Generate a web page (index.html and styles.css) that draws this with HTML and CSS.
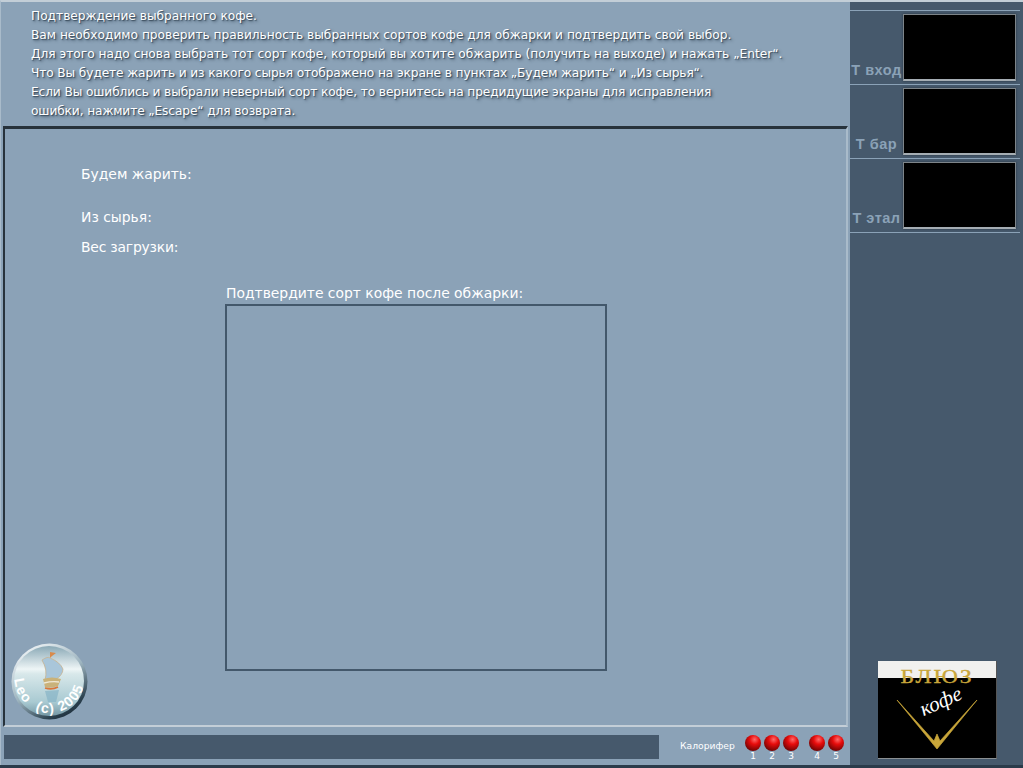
FILE: index.html
```html
<!DOCTYPE html>
<html>
<head>
    <meta charset="utf-8">
    <meta content="width=device-width, initial-scale=1" name="viewport">
    <title>Подтверждение выбранного кофе</title>
    <link rel="stylesheet" href="styles.css">
</head>
<body>
<div class="screen">
    <div class="left">
        <div class="help">
            <p>Подтверждение выбранного кофе.</p>
            <p>Вам необходимо проверить правильность выбранных сортов кофе для обжарки и подтвердить свой выбор.</p>
            <p>Для этого надо снова выбрать тот сорт кофе, который вы хотите обжарить (получить на выходе) и нажать „Enter“.</p>
            <p class="tight">Что Вы будете жарить и из какого сырья отображено на экране в пунктах „Будем жарить“ и „Из сырья“.</p>
            <p class="tight">Если Вы ошиблись и выбрали неверный сорт кофе, то вернитесь на предидущие экраны для исправления</p>
            <p class="tight">ошибки, нажмите „Escape“ для возврата.</p>
        </div>
        <div class="panel">
            <div class="field field-roast">Будем жарить:</div>
            <div class="field field-raw">Из сырья:</div>
            <div class="field field-weight">Вес загрузки:</div>
            <div class="confirm">
                <div class="confirm-title">Подтвердите сорт кофе после обжарки:</div>
                <div class="confirm-list"></div>
            </div>
            <svg class="badge" width="80" height="80" viewBox="0 0 80 80">
                <defs>
                    <linearGradient id="sky" x1="0" y1="0" x2="0" y2="1">
                        <stop offset="0" stop-color="#8aa9b6"/>
                        <stop offset="0.33" stop-color="#eef5f6"/>
                        <stop offset="0.4" stop-color="#d8e8ea"/>
                        <stop offset="0.8" stop-color="#a9cad2"/>
                        <stop offset="1" stop-color="#7497a4"/>
                    </linearGradient>
                    <linearGradient id="rim" x1="0.2" y1="0" x2="0.8" y2="1">
                        <stop offset="0" stop-color="#f2f6f8"/>
                        <stop offset="0.5" stop-color="#9db4bf"/>
                        <stop offset="0.85" stop-color="#2c4250"/>
                        <stop offset="1" stop-color="#182733"/>
                    </linearGradient>
                    <path id="badge-arc" d="M4.5 36 A35 35 0 0 0 74.5 36"/>
                </defs>
                <circle cx="39.5" cy="39.5" r="38" fill="url(#rim)"/>
                <circle cx="39" cy="39" r="35" fill="url(#sky)"/>
                <path d="M32 18 Q38 14 40 16 Q50 20 53 27 Q53 33 45 38 L35 38 Q38 28 32 18 Z" fill="#a9c6da" stroke="#c6b391" stroke-width="0.8"/>
                <path d="M40 16 L40 10 L46 11 L42 14 Z" fill="#d98a4a"/>
                <path d="M33 37 Q42 34 51 37 L48 44 Q40 47 35 45 Z" fill="#c9b27a"/>
                <path d="M34 41 Q42 39 49 40" fill="none" stroke="#efe9d6" stroke-width="1.4"/>
                <path d="M35 46 Q42 48 48 45" fill="none" stroke="#d9763a" stroke-width="1.8"/>
                <path d="M35 49 L49 48 L46 60 L38 60 Z" fill="#86b4c6" opacity="0.7"/>
                <text class="badge-text">
                    <textPath href="#badge-arc" startOffset="1">Leo</textPath>
                </text>
                <text class="badge-text">
                    <textPath href="#badge-arc" startOffset="40">(c) 2005</textPath>
                </text>
            </svg>
        </div>
        <div class="status">
            <div class="status-bar"></div>
            <div class="heater">
                <span class="heater-name">Калорифер</span>
                <div class="lamps">
                    <div class="lamp"><i></i><span>1</span></div>
                    <div class="lamp"><i></i><span>2</span></div>
                    <div class="lamp"><i></i><span>3</span></div>
                    <div class="lamp lamp-gap"><i></i><span>4</span></div>
                    <div class="lamp"><i></i><span>5</span></div>
                </div>
            </div>
        </div>
    </div>
    <div class="side">
        <div class="temps">
            <div class="temp"><span>Т вход</span><div class="temp-box"></div></div>
            <div class="temp"><span>Т бар</span><div class="temp-box"></div></div>
            <div class="temp"><span>Т этал</span><div class="temp-box"></div></div>
        </div>
        <div class="logo">
            <div class="logo-top"></div>
            <div class="logo-name">БЛЮЗ</div>
            <svg class="logo-mark" width="118" height="98" viewBox="0 0 118 98">
                <path d="M19 39 L59 88 L99 39 L62 80 L59 73 L56 80 Z" fill="#c9a63a" stroke="#c9a63a" stroke-width="0.7"/>
            </svg>
            <div class="logo-sub">кофе</div>
        </div>
    </div>
</div>
</body>
</html>
```

FILE: styles.css
```css
html, body {
    margin: 0;
    padding: 0;
    background: #2b3b4a;
}

.screen {
    width: 1023px;
    height: 765px;
    display: flex;
    font-family: "DejaVu Sans", Verdana, sans-serif;
    background: #46596c;
    border-bottom: 3px solid #2b3b4a;
    overflow: hidden;
}

.left {
    width: 850px;
    height: 765px;
    box-sizing: border-box;
    display: flex;
    flex-direction: column;
    background: #8ba2b7;
    border-top: 2px solid #c3ced7;
    border-left: 1px solid #a9bbca;
}

.help {
    height: 124px;
    box-sizing: border-box;
    padding: 5px 0 0 30px;
    color: #fff;
    font-size: 12.2px;
    line-height: 19px;
    text-shadow: 1px 1px 1px #3c4e5e, 2px 2px 3px #4a5e70;
}

.help p {
    margin: 0;
    white-space: nowrap;
}

.help .tight {
    letter-spacing: -0.11px;
}

.panel {
    position: relative;
    width: 845px;
    height: 601px;
    margin-left: 2px;
    box-sizing: border-box;
    border-top: 3px solid #27323b;
    border-left: 2px solid #27323b;
    border-right: 2px solid #a9bbca;
    border-bottom: 2px solid #c3ced7;
    color: #fff;
    font-size: 13.9px;
}

.field {
    margin-left: 76px;
    line-height: 16px;
}

.field-roast {
    padding-top: 37px;
}

.field-raw {
    padding-top: 27px;
}

.field-weight {
    padding-top: 14px;
    letter-spacing: -0.2px;
}

.confirm {
    margin: 30px 0 0 221px;
}

.confirm-title {
    line-height: 16px;
    height: 19px;
    white-space: nowrap;
}

.confirm-list {
    width: 378px;
    height: 363px;
    margin-left: -1px;
    border: 2px solid #43586b;
}

.badge {
    position: absolute;
    left: 5px;
    bottom: 3px;
}

.badge-text {
    font-family: "Liberation Sans", sans-serif;
    font-size: 14px;
    font-weight: bold;
    letter-spacing: 1.2px;
    fill: #fff;
}

.status {
    height: 36px;
    display: flex;
    align-items: flex-start;
}

.status-bar {
    width: 655px;
    height: 24px;
    margin: 8px 0 0 3px;
    background: #46596c;
}

.heater {
    display: flex;
    margin-top: 8px;
}

.heater-name {
    margin-left: 21px;
    width: 65px;
    color: #fff;
    font-size: 9.2px;
    line-height: 21px;
}

.lamps {
    display: flex;
    gap: 3px;
}

.lamp {
    width: 16px;
    text-align: center;
    color: #fff;
    font-size: 9px;
    line-height: 11px;
}

.lamp i {
    display: block;
    width: 16px;
    height: 16px;
    border-radius: 50%;
    background: radial-gradient(circle at 60% 28%, #ff6a6a 0, #e80c0c 32%, #8a0505 68%, #2f0505 100%);
}

.lamp-gap {
    margin-left: 7px;
}

.side {
    flex: 1;
    display: flex;
    flex-direction: column;
    justify-content: space-between;
    border-top: 2px solid #c3ced7;
}

.temps {
    margin-top: 8px;
    width: 170px;
    border-top: 1px solid #8ba2b7;
}

.temp {
    height: 74px;
    box-sizing: border-box;
    display: flex;
    justify-content: flex-end;
    align-items: flex-end;
    padding: 0 4px 3px 0;
    border-bottom: 1px solid #8ba2b7;
}

.temp span {
    width: 53px;
    margin-bottom: 1px;
    text-align: center;
    color: #8ba2b7;
    font-family: "Liberation Sans", sans-serif;
    font-size: 14.5px;
    font-weight: bold;
    letter-spacing: 0.5px;
    line-height: 20px;
    white-space: nowrap;
}

.temp-box {
    width: 113px;
    height: 67px;
    flex: none;
    box-sizing: border-box;
    background: #000;
    border: 1px solid #7d8489;
    border-bottom: 2px solid #a5adb3;
    box-shadow: 0 0 2px #26333f;
}

.logo {
    position: relative;
    width: 118px;
    height: 97px;
    margin: 0 0 6px 28px;
    background: #000;
    border-bottom: 1px solid #8a8f92;
    border-right: 1px solid #555;
    overflow: hidden;
}

.logo-top {
    height: 17px;
    background: #f1f1ef;
}

.logo-name {
    position: absolute;
    left: 0;
    right: 0;
    top: 5px;
    text-align: center;
    color: #c9a63a;
    font-family: "Liberation Serif", serif;
    font-size: 19px;
    letter-spacing: 1.5px;
    transform: scaleX(1.25);
    -webkit-text-stroke: 0.3px #c9a63a;
}

.logo-mark {
    position: absolute;
    left: 0;
    top: 0;
}

.logo-sub {
    position: absolute;
    left: 41px;
    top: 28px;
    color: #fff;
    font-family: "Liberation Serif", serif;
    font-size: 21px;
    font-style: italic;
    transform: rotate(-24deg);
}
```
